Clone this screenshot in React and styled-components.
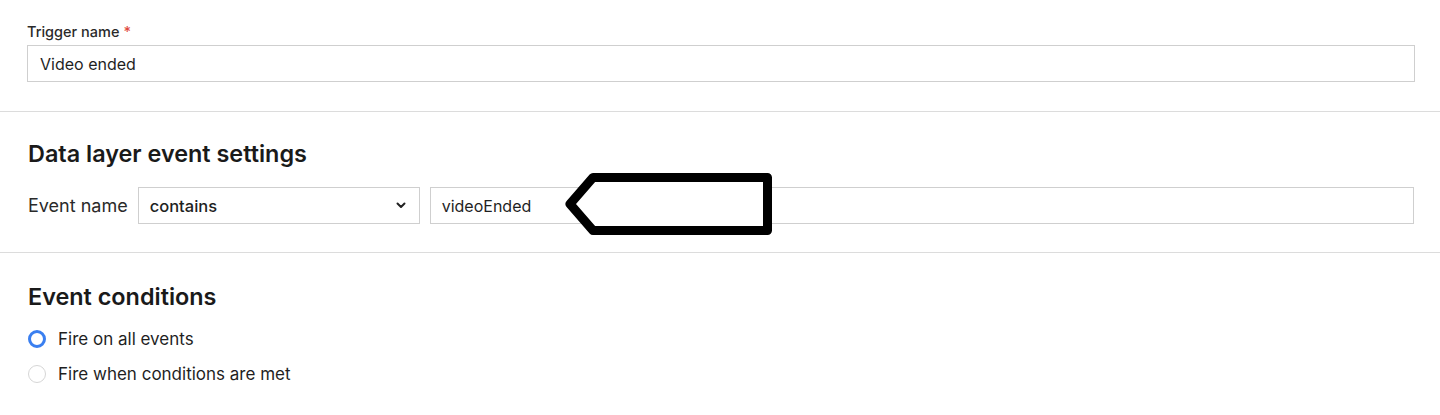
import React from "react";
import styled, { createGlobalStyle } from "styled-components";

const Global = createGlobalStyle`
  html, body { margin: 0; padding: 0; background: #fff; }
  body { font-family: Inter, "Noto Sans", "Liberation Sans", sans-serif; color: #1f1f1f; }
  * { box-sizing: border-box; }
`;

const Page = styled.div`
  width: 1440px;
  height: 415px;
  overflow: hidden;
  background: #fff;
`;

const Section = styled.section`
  position: relative;
  padding: ${(p) => p.$pad};
  border-bottom: ${(p) => (p.$divider ? "1px solid #dcdcdc" : "none")};
`;

const Label = styled.label`
  display: block;
  font-size: 14.5px;
  line-height: 16px;
  font-weight: 500;
  color: #2a2a2a;
  margin-bottom: 5px;
`;

const Req = styled.span`
  color: #e0483e;
  margin-left: 4px;
`;

const TextInput = styled.div`
  height: 37px;
  border: 1px solid #cfcfcf;
  display: flex;
  align-items: center;
  padding: 0 ${(p) => p.$padX || 11}px;
  font-size: ${(p) => p.$size || 16}px;
  color: #1f1f1f;
  flex: ${(p) => (p.$grow ? 1 : "none")};
  background: #fff;
`;

const Heading = styled.h2`
  margin: 0;
  font-size: 23.4px;
  line-height: 24px;
  font-weight: 600;
  color: #1a1a1a;
`;

const Row = styled.div`
  display: flex;
  align-items: center;
  gap: 10px;
  margin-top: 21px;
`;

const RowLabel = styled.span`
  font-size: 18px;
  color: #2a2a2a;
`;

const Select = styled.div`
  width: 282px;
  height: 37px;
  border: 1px solid #cfcfcf;
  display: flex;
  align-items: center;
  justify-content: space-between;
  padding: 0 13px 0 11px;
  font-size: 16.5px;
  font-weight: 500;
  color: #1f1f1f;
`;

const Radios = styled.div`
  display: flex;
  flex-direction: column;
  gap: 15px;
  margin-top: 20px;
`;

const RadioRow = styled.div`
  display: flex;
  align-items: center;
  gap: 12px;
  height: 20px;
  font-size: 17px;
  color: #1f1f1f;
`;

const Radio = styled.span`
  width: 18px;
  height: 18px;
  border-radius: 50%;
  border: ${(p) => (p.$checked ? "3px solid #3a7ff0" : "1px solid #d6d6d6")};
  background: #fff;
  flex: none;
`;

const Callout = styled.svg`
  position: absolute;
  left: 560px;
  top: 56px;
`;

export default function App() {
  return (
    <Page>
      <Global />
      <Section $divider $pad="24px 25px 29px 27px">
        <Label>
          Trigger name<Req>*</Req>
        </Label>
        <TextInput $size={16} $padX={12}>Video ended</TextInput>
      </Section>
      <Section $divider $pad="30px 26px 28px 28px">
        <Heading>Data layer event settings</Heading>
        <Row>
          <RowLabel>Event name</RowLabel>
          <Select>
            <span>contains</span>
            <svg width="10" height="7" viewBox="0 0 10 7">
              <path d="M1.5 1.5 L5 5 L8.5 1.5" fill="none" stroke="#222" strokeWidth="2" strokeLinecap="round" strokeLinejoin="round" />
            </svg>
          </Select>
          <TextInput $grow>videoEnded</TextInput>
        </Row>
        <Callout width="220" height="75" viewBox="0 0 220 75">
          <path
            d="M33 9.5 L207.5 9.5 L207.5 62.5 L33 62.5 L10 36 Z"
            fill="#fff"
            stroke="#000"
            strokeWidth="9"
            strokeLinejoin="round"
          />
        </Callout>
      </Section>
      <Section $pad="32px 26px 20px 28px">
        <Heading>Event conditions</Heading>
        <Radios>
          <RadioRow>
            <Radio $checked />
            Fire on all events
          </RadioRow>
          <RadioRow>
            <Radio />
            Fire when conditions are met
          </RadioRow>
        </Radios>
      </Section>
    </Page>
  );
}
